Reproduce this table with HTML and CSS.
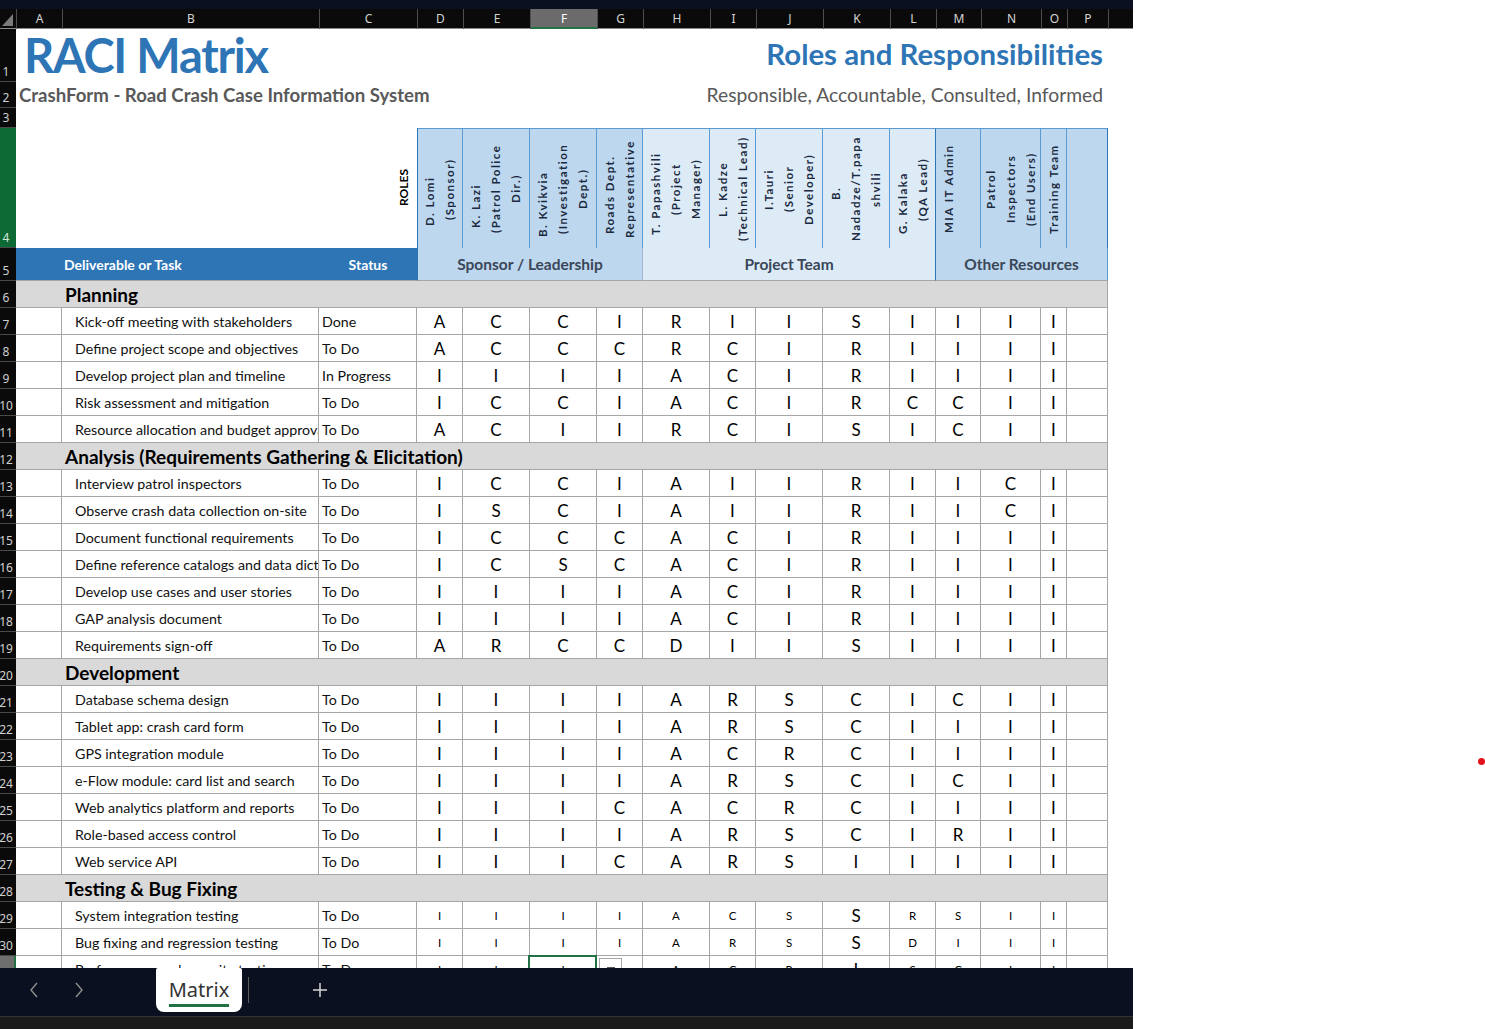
FILE: index.html
```html
<!DOCTYPE html>
<html lang="en">
<head>
<meta charset="utf-8">
<title>RACI Matrix</title>
<link rel="stylesheet" href="styles.css">
</head>
<body>
<div class="app">
  <div class="topband"></div>
  <div class="colhead">
    <div class="corner"><svg width="16" height="20" viewBox="0 0 16 20"><polygon points="2,17 13,17 13,5" fill="#7a7a7a"/></svg></div>
    <div class="ch">A</div><div class="ch">B</div><div class="ch">C</div><div class="ch">D</div><div class="ch">E</div><div class="ch sel">F</div><div class="ch">G</div><div class="ch">H</div><div class="ch">I</div><div class="ch">J</div><div class="ch">K</div><div class="ch">L</div><div class="ch">M</div><div class="ch">N</div><div class="ch">O</div><div class="ch">P</div><div class="ch">Q</div>
  </div>
  <div class="sheet">
    <div class="r r1">
      <div class="rh"><span>1</span></div>
      <div class="top1"><div class="title">RACI Matrix</div><div class="rr">Roles and Responsibilities</div></div>
    </div>
    <div class="r r2">
      <div class="rh"><span>2</span></div>
      <div class="top2"><div class="sub">CrashForm - Road Crash Case Information System</div><div class="rsub">Responsible, Accountable, Consulted, Informed</div></div>
    </div>
    <div class="r r3">
      <div class="rh"><span>3</span></div>
    </div>
    <div class="r r4">
      <div class="rh rgreen"><span>4</span></div>
      <div class="blank4"></div>
      <div class="roles"><div class="vroles">ROLES</div></div>
      <div class="hd g1 first"><div class="vt"><span class="p24">D. Lomi</span><span>(Sponsor)</span></div></div>
      <div class="hd g1"><div class="vt"><span class="p34">K. Lazi</span><span>(Patrol Police</span><span>Dir.)</span></div></div>
      <div class="hd g1"><div class="vt"><span class="p30">B. Kvikvia</span><span>(Investigation</span><span>Dept.)</span></div></div>
      <div class="hd g1"><div class="vt"><span class="p12">Roads Dept.</span><span>Representative</span></div></div>
      <div class="hd g2"><div class="vt"><span class="p10">T. Papashvili</span><span>(Project</span><span>Manager)</span></div></div>
      <div class="hd g2"><div class="vt"><span>L. Kadze</span><span>(Technical Lead)</span></div></div>
      <div class="hd g2"><div class="vt"><span>I.Tauri</span><span>(Senior</span><span>Developer)</span></div></div>
      <div class="hd g2"><div class="vt"><span class="p8">B.</span><span>Nadadze/T.papa</span><span>shvili</span></div></div>
      <div class="hd g2 edge"><div class="vt"><span class="p28">G. Kalaka</span><span>(QA Lead)</span></div></div>
      <div class="hd g1 shiftl"><div class="vt"><span>MIA IT Admin</span></div></div>
      <div class="hd g1"><div class="vt"><span>Patrol</span><span>Inspectors</span><span>(End Users)</span></div></div>
      <div class="hd g1"><div class="vt"><span>Training Team</span></div></div>
      <div class="hd g1 edge"></div>
    </div>
    <div class="r r5">
      <div class="rh"><span>5</span></div>
      <div class="bl bl-a"></div>
      <div class="bl bl-b">Deliverable or Task</div>
      <div class="bl bl-c">Status</div>
      <div class="grp grp1">Sponsor / Leadership</div>
      <div class="grp grp2">Project Team</div>
      <div class="grp grp3">Other Resources</div>
    </div>

    <div class="r"><div class="rh"><span>6</span></div><div class="cat">Planning</div></div>
    <div class="r"><div class="rh"><span>7</span></div><div class="c a"></div><div class="c b">Kick-off meeting with stakeholders</div><div class="c s">Done</div><div class="c x">A</div><div class="c x">C</div><div class="c x">C</div><div class="c x">I</div><div class="c x">R</div><div class="c x">I</div><div class="c x">I</div><div class="c x">S</div><div class="c x">I</div><div class="c x">I</div><div class="c x">I</div><div class="c x">I</div><div class="c x"></div></div>
    <div class="r"><div class="rh"><span>8</span></div><div class="c a"></div><div class="c b">Define project scope and objectives</div><div class="c s">To Do</div><div class="c x">A</div><div class="c x">C</div><div class="c x">C</div><div class="c x">C</div><div class="c x">R</div><div class="c x">C</div><div class="c x">I</div><div class="c x">R</div><div class="c x">I</div><div class="c x">I</div><div class="c x">I</div><div class="c x">I</div><div class="c x"></div></div>
    <div class="r"><div class="rh"><span>9</span></div><div class="c a"></div><div class="c b">Develop project plan and timeline</div><div class="c s">In Progress</div><div class="c x">I</div><div class="c x">I</div><div class="c x">I</div><div class="c x">I</div><div class="c x">A</div><div class="c x">C</div><div class="c x">I</div><div class="c x">R</div><div class="c x">I</div><div class="c x">I</div><div class="c x">I</div><div class="c x">I</div><div class="c x"></div></div>
    <div class="r"><div class="rh"><span>10</span></div><div class="c a"></div><div class="c b">Risk assessment and mitigation</div><div class="c s">To Do</div><div class="c x">I</div><div class="c x">C</div><div class="c x">C</div><div class="c x">I</div><div class="c x">A</div><div class="c x">C</div><div class="c x">I</div><div class="c x">R</div><div class="c x">C</div><div class="c x">C</div><div class="c x">I</div><div class="c x">I</div><div class="c x"></div></div>
    <div class="r"><div class="rh"><span>11</span></div><div class="c a"></div><div class="c b">Resource allocation and budget approval</div><div class="c s">To Do</div><div class="c x">A</div><div class="c x">C</div><div class="c x">I</div><div class="c x">I</div><div class="c x">R</div><div class="c x">C</div><div class="c x">I</div><div class="c x">S</div><div class="c x">I</div><div class="c x">C</div><div class="c x">I</div><div class="c x">I</div><div class="c x"></div></div>

    <div class="r"><div class="rh"><span>12</span></div><div class="cat">Analysis (Requirements Gathering &amp; Elicitation)</div></div>
    <div class="r"><div class="rh"><span>13</span></div><div class="c a"></div><div class="c b">Interview patrol inspectors</div><div class="c s">To Do</div><div class="c x">I</div><div class="c x">C</div><div class="c x">C</div><div class="c x">I</div><div class="c x">A</div><div class="c x">I</div><div class="c x">I</div><div class="c x">R</div><div class="c x">I</div><div class="c x">I</div><div class="c x">C</div><div class="c x">I</div><div class="c x"></div></div>
    <div class="r"><div class="rh"><span>14</span></div><div class="c a"></div><div class="c b">Observe crash data collection on-site</div><div class="c s">To Do</div><div class="c x">I</div><div class="c x">S</div><div class="c x">C</div><div class="c x">I</div><div class="c x">A</div><div class="c x">I</div><div class="c x">I</div><div class="c x">R</div><div class="c x">I</div><div class="c x">I</div><div class="c x">C</div><div class="c x">I</div><div class="c x"></div></div>
    <div class="r"><div class="rh"><span>15</span></div><div class="c a"></div><div class="c b">Document functional requirements</div><div class="c s">To Do</div><div class="c x">I</div><div class="c x">C</div><div class="c x">C</div><div class="c x">C</div><div class="c x">A</div><div class="c x">C</div><div class="c x">I</div><div class="c x">R</div><div class="c x">I</div><div class="c x">I</div><div class="c x">I</div><div class="c x">I</div><div class="c x"></div></div>
    <div class="r"><div class="rh"><span>16</span></div><div class="c a"></div><div class="c b">Define reference catalogs and data dictionary</div><div class="c s">To Do</div><div class="c x">I</div><div class="c x">C</div><div class="c x">S</div><div class="c x">C</div><div class="c x">A</div><div class="c x">C</div><div class="c x">I</div><div class="c x">R</div><div class="c x">I</div><div class="c x">I</div><div class="c x">I</div><div class="c x">I</div><div class="c x"></div></div>
    <div class="r"><div class="rh"><span>17</span></div><div class="c a"></div><div class="c b">Develop use cases and user stories</div><div class="c s">To Do</div><div class="c x">I</div><div class="c x">I</div><div class="c x">I</div><div class="c x">I</div><div class="c x">A</div><div class="c x">C</div><div class="c x">I</div><div class="c x">R</div><div class="c x">I</div><div class="c x">I</div><div class="c x">I</div><div class="c x">I</div><div class="c x"></div></div>
    <div class="r"><div class="rh"><span>18</span></div><div class="c a"></div><div class="c b">GAP analysis document</div><div class="c s">To Do</div><div class="c x">I</div><div class="c x">I</div><div class="c x">I</div><div class="c x">I</div><div class="c x">A</div><div class="c x">C</div><div class="c x">I</div><div class="c x">R</div><div class="c x">I</div><div class="c x">I</div><div class="c x">I</div><div class="c x">I</div><div class="c x"></div></div>
    <div class="r"><div class="rh"><span>19</span></div><div class="c a"></div><div class="c b">Requirements sign-off</div><div class="c s">To Do</div><div class="c x">A</div><div class="c x">R</div><div class="c x">C</div><div class="c x">C</div><div class="c x">D</div><div class="c x">I</div><div class="c x">I</div><div class="c x">S</div><div class="c x">I</div><div class="c x">I</div><div class="c x">I</div><div class="c x">I</div><div class="c x"></div></div>

    <div class="r"><div class="rh"><span>20</span></div><div class="cat">Development</div></div>
    <div class="r"><div class="rh"><span>21</span></div><div class="c a"></div><div class="c b">Database schema design</div><div class="c s">To Do</div><div class="c x">I</div><div class="c x">I</div><div class="c x">I</div><div class="c x">I</div><div class="c x">A</div><div class="c x">R</div><div class="c x">S</div><div class="c x">C</div><div class="c x">I</div><div class="c x">C</div><div class="c x">I</div><div class="c x">I</div><div class="c x"></div></div>
    <div class="r"><div class="rh"><span>22</span></div><div class="c a"></div><div class="c b">Tablet app: crash card form</div><div class="c s">To Do</div><div class="c x">I</div><div class="c x">I</div><div class="c x">I</div><div class="c x">I</div><div class="c x">A</div><div class="c x">R</div><div class="c x">S</div><div class="c x">C</div><div class="c x">I</div><div class="c x">I</div><div class="c x">I</div><div class="c x">I</div><div class="c x"></div></div>
    <div class="r"><div class="rh"><span>23</span></div><div class="c a"></div><div class="c b">GPS integration module</div><div class="c s">To Do</div><div class="c x">I</div><div class="c x">I</div><div class="c x">I</div><div class="c x">I</div><div class="c x">A</div><div class="c x">C</div><div class="c x">R</div><div class="c x">C</div><div class="c x">I</div><div class="c x">I</div><div class="c x">I</div><div class="c x">I</div><div class="c x"></div></div>
    <div class="r"><div class="rh"><span>24</span></div><div class="c a"></div><div class="c b">e-Flow module: card list and search</div><div class="c s">To Do</div><div class="c x">I</div><div class="c x">I</div><div class="c x">I</div><div class="c x">I</div><div class="c x">A</div><div class="c x">R</div><div class="c x">S</div><div class="c x">C</div><div class="c x">I</div><div class="c x">C</div><div class="c x">I</div><div class="c x">I</div><div class="c x"></div></div>
    <div class="r"><div class="rh"><span>25</span></div><div class="c a"></div><div class="c b">Web analytics platform and reports</div><div class="c s">To Do</div><div class="c x">I</div><div class="c x">I</div><div class="c x">I</div><div class="c x">C</div><div class="c x">A</div><div class="c x">C</div><div class="c x">R</div><div class="c x">C</div><div class="c x">I</div><div class="c x">I</div><div class="c x">I</div><div class="c x">I</div><div class="c x"></div></div>
    <div class="r"><div class="rh"><span>26</span></div><div class="c a"></div><div class="c b">Role-based access control</div><div class="c s">To Do</div><div class="c x">I</div><div class="c x">I</div><div class="c x">I</div><div class="c x">I</div><div class="c x">A</div><div class="c x">R</div><div class="c x">S</div><div class="c x">C</div><div class="c x">I</div><div class="c x">R</div><div class="c x">I</div><div class="c x">I</div><div class="c x"></div></div>
    <div class="r"><div class="rh"><span>27</span></div><div class="c a"></div><div class="c b">Web service API</div><div class="c s">To Do</div><div class="c x">I</div><div class="c x">I</div><div class="c x">I</div><div class="c x">C</div><div class="c x">A</div><div class="c x">R</div><div class="c x">S</div><div class="c x">I</div><div class="c x">I</div><div class="c x">I</div><div class="c x">I</div><div class="c x">I</div><div class="c x"></div></div>

    <div class="r"><div class="rh"><span>28</span></div><div class="cat">Testing &amp; Bug Fixing</div></div>
    <div class="r"><div class="rh"><span>29</span></div><div class="c a"></div><div class="c b">System integration testing</div><div class="c s">To Do</div><div class="c x sm">I</div><div class="c x sm">I</div><div class="c x sm">I</div><div class="c x sm">I</div><div class="c x sm">A</div><div class="c x sm">C</div><div class="c x sm">S</div><div class="c x">S</div><div class="c x sm">R</div><div class="c x sm">S</div><div class="c x sm">I</div><div class="c x sm">I</div><div class="c x"></div></div>
    <div class="r"><div class="rh"><span>30</span></div><div class="c a"></div><div class="c b">Bug fixing and regression testing</div><div class="c s">To Do</div><div class="c x sm">I</div><div class="c x sm">I</div><div class="c x sm">I</div><div class="c x sm">I</div><div class="c x sm">A</div><div class="c x sm">R</div><div class="c x sm">S</div><div class="c x">S</div><div class="c x sm">D</div><div class="c x sm">I</div><div class="c x sm">I</div><div class="c x sm">I</div><div class="c x"></div></div>
    <div class="r"><div class="rh rsel"><span>31</span></div><div class="c a"></div><div class="c b">Performance and security testing</div><div class="c s">To Do</div><div class="c x sm">I</div><div class="c x sm">I</div><div class="c x sm cur">I</div><div class="c x sm ddhost"><span class="dd"></span></div><div class="c x sm">A</div><div class="c x sm">C</div><div class="c x sm">R</div><div class="c x">I</div><div class="c x sm">S</div><div class="c x sm">C</div><div class="c x sm">I</div><div class="c x sm">I</div><div class="c x"></div></div>
  </div>
  <div class="tabbar">
    <div class="nav"><svg width="10" height="16" viewBox="0 0 10 16"><polyline points="8,1 2,8 8,15" fill="none" stroke="#8e8e8e" stroke-width="1.4"/></svg></div>
    <div class="nav"><svg width="10" height="16" viewBox="0 0 10 16"><polyline points="2,1 8,8 2,15" fill="none" stroke="#8e8e8e" stroke-width="1.4"/></svg></div>
    <div class="tab"><span class="tabtxt">Matrix</span></div>
    <div class="divider"></div>
    <div class="plus"><svg width="16" height="16" viewBox="0 0 16 16"><path d="M8 1V15M1 8H15" stroke="#d8d8d8" stroke-width="1.5" fill="none"/></svg></div>
  </div>
  <div class="statusstrip"></div>
</div>
<div class="dot"></div>
</body>
</html>
```
FILE: styles.css
```css
:root {
  --cols: 16px 46px 257px 98px 46px 67px 67px 46px 67px 46px 67px 67px 46px 45px 60px 26px 41px 60px;
  --line: #a6a6a6;
  --blue: #2e75b6;
}
* { box-sizing: border-box; margin: 0; padding: 0; }
html, body { background: #fff; }
body {
  width: 1485px;
  height: 1029px;
  overflow: hidden;
  position: relative;
  font-family: Lato, "Liberation Sans", sans-serif;
  color: #000;
}
.app {
  width: 1133px;
  height: 1029px;
  background: #0b1020;
  display: flex;
  flex-direction: column;
  overflow: hidden;
}
.topband { height: 9px; flex: none; }
.colhead {
  height: 20px;
  flex: none;
  display: grid;
  grid-template-columns: var(--cols);
  background: #0a0a0a;
  border-bottom: 1px solid #8c8c8c;
  font-family: "Noto Sans", "DejaVu Sans", sans-serif;
  font-size: 12px;
  color: #d4d4d4;
}
.corner { display: flex; }
.ch {
  display: flex;
  align-items: center;
  justify-content: center;
  border-left: 1px solid #4e4e4e;
  line-height: 1;
}
.ch.sel {
  background: #6b6b6b;
  color: #fff;
  box-shadow: inset 0 -2px 0 #217346;
}
.sheet {
  height: 939px;
  flex: none;
  background: #fff;
  overflow: hidden;
}
.r {
  display: grid;
  grid-template-columns: var(--cols);
  height: 27px;
}
.r1 { height: 53px; }
.r2 { height: 26px; }
.r3 { height: 20px; }
.r4 { height: 120px; }
.r5 { height: 33px; }
.rh {
  grid-column: 1;
  background: #0a0a0a;
  border-bottom: 1px solid #4a4a4a;
  display: flex;
  align-items: flex-end;
  overflow: hidden;
  font-family: "Noto Sans", "DejaVu Sans", sans-serif;
  font-size: 12px;
  line-height: 14px;
  color: #cfcfcf;
  padding-bottom: 2px;
}
.rh span { flex: none; width: 20px; margin-left: -4px; text-align: center; }
.rh.rgreen { background: #0e6a35; color: #cfe8d6; }
.rh.rsel { background: #6e6e6e; box-shadow: inset -2px 0 0 #217346; }

/* header rows */
.top1, .top2 {
  grid-column: 2 / 18;
  display: flex;
  justify-content: space-between;
  align-items: flex-end;
  white-space: nowrap;
}
.top1 { padding: 0 5px 0 8px; }
.top2 { padding: 0 5px 0 3px; }
.title {
  font-size: 47px;
  line-height: 47px;
  letter-spacing: -1.2px;
  font-weight: 700;
  color: var(--blue);
  padding-bottom: 3px;
}
.rr {
  font-size: 29.4px;
  line-height: 29px;
  font-weight: 700;
  color: var(--blue);
  padding-bottom: 14px;
}
.sub {
  font-size: 18.6px;
  line-height: 18px;
  font-weight: 700;
  color: #595959;
  padding-bottom: 4px;
}
.rsub {
  font-size: 19.3px;
  line-height: 18px;
  color: #595959;
  padding-bottom: 4px;
}
.blank4 { grid-column: 2 / 4; }
.roles {
  display: flex;
  justify-content: flex-end;
  align-items: center;
  padding-right: 6px;
}
.vroles {
  writing-mode: vertical-rl;
  transform: rotate(180deg);
  font-size: 12px;
  line-height: 14px;
  font-weight: 700;
}
.hd {
  border-top: 1px solid #5b9bd5;
  border-right: 1px solid #5b9bd5;
  display: flex;
  justify-content: center;
  align-items: center;
  overflow: hidden;
}
.hd.first { border-left: 1px solid var(--blue); }
.hd.edge { border-right-color: var(--blue); }
.hd.g1 { background: #bdd7ee; }
.hd.g2 { background: #ddebf7; }
.hd.shiftl { padding-right: 18px; }
.vt {
  writing-mode: vertical-rl;
  transform: rotate(180deg);
  height: 116px;
  text-align: center;
  white-space: nowrap;
  font-size: 11.5px;
  line-height: 20px;
  font-weight: 700;
  letter-spacing: 1.5px;
  color: #1b2a40;
}
.vt span { display: block; }
.vt .p8 { padding-inline-end: 8px; }
.vt .p10 { padding-inline-end: 10px; }
.vt .p12 { padding-inline-end: 12px; }
.vt .p24 { padding-inline-end: 24px; }
.vt .p28 { padding-inline-end: 28px; }
.vt .p30 { padding-inline-end: 30px; }
.vt .p34 { padding-inline-end: 34px; }

.bl {
  background: var(--blue);
  border-bottom: 1px solid var(--line);
  color: #fff;
  font-size: 14px;
  font-weight: 700;
  display: flex;
  align-items: center;
}
.bl-b { padding-left: 2px; }
.bl-c { justify-content: center; }
.grp {
  display: flex;
  align-items: center;
  justify-content: center;
  font-size: 15.5px;
  font-weight: 700;
  color: #3a4759;
  border-bottom: 1px solid var(--line);
}
.grp1 { grid-column: span 4; background: #bdd7ee; border-left: 1px solid var(--blue); border-right: 1px solid #9fb7cc; }
.grp2 { grid-column: span 5; background: #ddebf7; border-right: 1px solid var(--blue); }
.grp3 { grid-column: span 4; background: #bdd7ee; border-right: 1px solid #5b9bd5; }

/* body rows */
.cat {
  grid-column: 2 / 18;
  background: #d9d9d9;
  border-bottom: 1px solid var(--line);
  border-right: 1px solid var(--line);
  display: flex;
  align-items: center;
  padding-left: 49px;
  font-size: 19px;
  font-weight: 700;
  white-space: nowrap;
}
.c {
  border-right: 1px solid var(--line);
  border-bottom: 1px solid var(--line);
  display: flex;
  align-items: center;
  white-space: nowrap;
  overflow: hidden;
}
.b { padding-left: 13px; font-size: 14.25px; color: #111; }
.s { padding-left: 3px; font-size: 14.25px; color: #111; }
.x { justify-content: center; font-size: 17px; }
.x.sm { font-size: 11.5px; }
.cur { position: relative; overflow: visible; }
.cur::after {
  content: "";
  position: absolute;
  left: -2px;
  top: -1px;
  right: -1px;
  bottom: -1px;
  border: 2px solid #217346;
}
.ddhost { position: relative; }
.dd {
  position: absolute;
  left: 2px;
  top: 2px;
  width: 23px;
  height: 22px;
  background: #fff;
  border: 1px solid #a8a8a8;
}
.dd::after {
  content: "";
  position: absolute;
  left: 7px;
  top: 8px;
  width: 8px;
  height: 2px;
  background: #555;
}

/* tab bar */
.tabbar {
  height: 48px;
  flex: none;
  display: flex;
  align-items: flex-start;
  background: #0b1020;
}
.nav {
  height: 44px;
  display: flex;
  align-items: center;
}
.nav:first-child { width: 58px; justify-content: flex-end; padding-right: 19px; }
.nav:nth-child(2) { width: 50px; justify-content: flex-start; padding-left: 16px; }
.tab {
  margin-left: 48px;
  width: 86px;
  height: 44px;
  background: #fff;
  border-radius: 2px 2px 8px 8px;
  display: flex;
  align-items: center;
  justify-content: center;
}
.tabtxt {
  font-family: "Noto Sans", "DejaVu Sans", sans-serif;
  font-size: 20px;
  line-height: 26px;
  color: #333;
  border-bottom: 3px solid #217346;
  padding-bottom: 1px;
  margin-top: 4px;
}
.divider {
  width: 1px;
  height: 26px;
  margin: 9px 0 0 6px;
  background: #5c5c5c;
}
.plus {
  margin-left: 63px;
  height: 44px;
  display: flex;
  align-items: center;
}
.statusstrip {
  flex: 1;
  background: #1b1b1b;
  border-top: 1px solid #333;
}
.dot {
  position: absolute;
  left: 1478px;
  top: 758px;
  width: 7px;
  height: 7px;
  border-radius: 50%;
  background: #e3121b;
}
```
